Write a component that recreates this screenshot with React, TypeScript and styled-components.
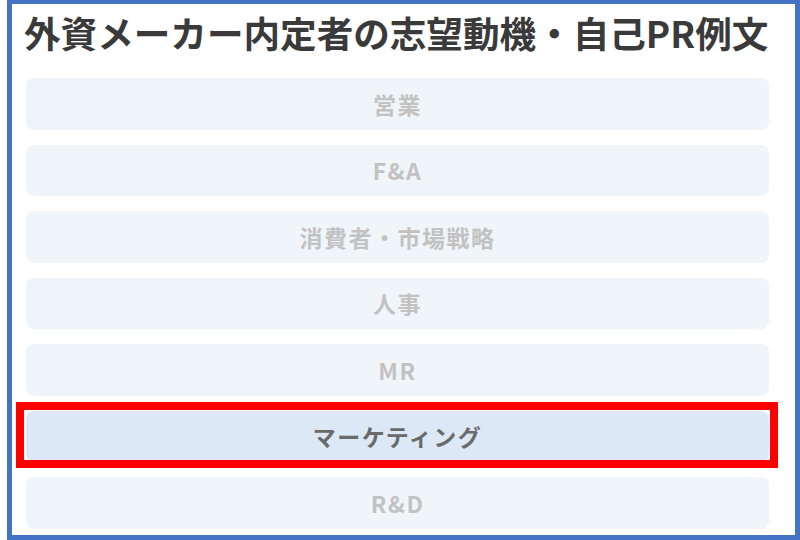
import React from "react";
import styled, { createGlobalStyle } from "styled-components";

const GlobalStyle = createGlobalStyle`
  html, body {
    margin: 0;
    padding: 0;
    background: #ffffff;
  }
  body {
    font-family: "Noto Sans CJK JP", "Noto Sans", sans-serif;
  }
`;

const Frame = styled.div`
  box-sizing: border-box;
  width: 793px;
  height: 540px;
  margin-left: 7px;
  border: 5px solid #4472c4;
  border-top-width: 4px;
  padding: 2px 26px 0 14px;
  overflow: hidden;
  display: flex;
  flex-direction: column;
`;

const Title = styled.h1`
  margin: 0 0 0 -2px;
  font-size: 36.6px;
  line-height: 54px;
  font-weight: 700;
  color: #3a3a3a;
  white-space: nowrap;
  letter-spacing: 0;
`;

const List = styled.div`
  display: flex;
  flex-direction: column;
  gap: 15px;
  margin-top: 18px;
`;

const Item = styled.div<{ $active?: boolean }>`
  position: relative;
  height: 51.5px;
  border-radius: 8px;
  display: flex;
  align-items: center;
  justify-content: center;
  font-size: 23px;
  font-weight: 700;
  letter-spacing: 1.5px;
  background: ${(p) => (p.$active ? "#dce8f5" : "#f0f5fa")};
  color: ${(p) => (p.$active ? "#6a6a6a" : "#c2c2c2")};
`;

const Highlight = styled.span`
  position: absolute;
  top: -9px;
  left: -10px;
  right: -9px;
  bottom: -6px;
  border: 8px solid #ff0000;
  pointer-events: none;
`;

const categories = [
  "営業",
  "F&A",
  "消費者・市場戦略",
  "人事",
  "MR",
  "マーケティング",
  "R&D",
];

const App = () => {
  return (
    <React.Fragment>
      <GlobalStyle />
      <Frame>
        <Title>外資メーカー内定者の志望動機・自己PR例文</Title>
        <List>
          {categories.map((c) => {
            const active = c === "マーケティング";
            return (
              <Item key={c} $active={active}>
                {c}
                {active && <Highlight />}
              </Item>
            );
          })}
        </List>
      </Frame>
    </React.Fragment>
  );
};

export default App;
